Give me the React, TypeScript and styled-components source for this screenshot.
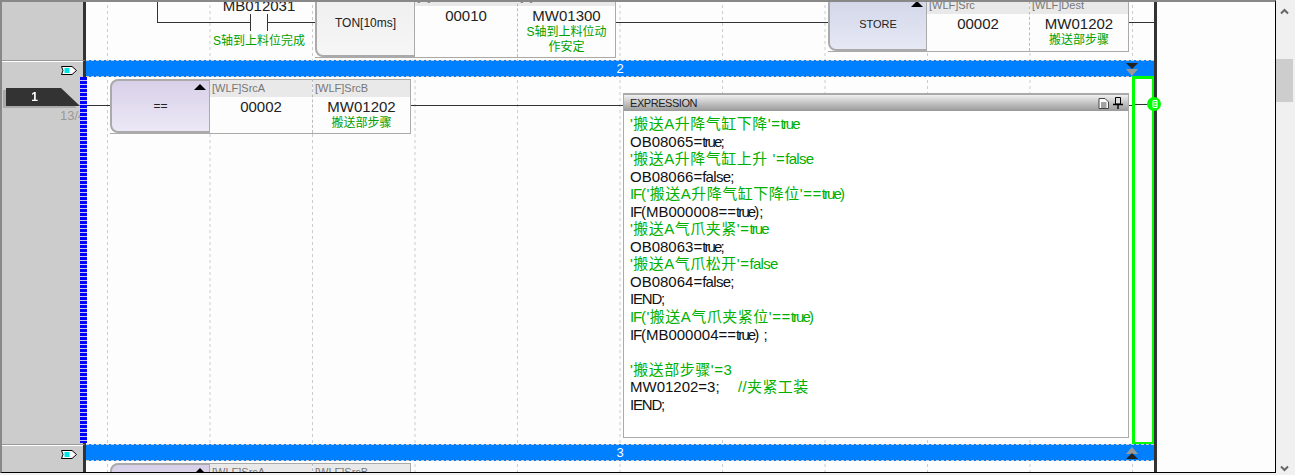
import React from 'react';
import styled, { createGlobalStyle } from 'styled-components';

const Global = createGlobalStyle`
  html, body { margin: 0; padding: 0; background: #f0f0f0; }
  body { font-family: "Liberation Sans", "Noto Sans CJK SC", sans-serif; }
  * { box-sizing: border-box; }
`;

const Window = styled.div`
  width: 1295px; height: 475px; display: flex; overflow: hidden; background: #f0f0f0;
`;
const Main = styled.div`
  width: 1276px; height: 473px; display: flex;
  border-top: 2px solid #888; border-left: 2px solid #888; border-bottom: 1px solid #000; border-right: 1px solid #000;
  background: #fdfdfd;
`;
const Ladder = styled.div`
  width: 1155px; display: flex; flex-direction: column;
`;
const Blank = styled.div`flex: 1; background: #fdfdfd;`;

const Scrollbar = styled.div`
  width: 17px; height: 473px; margin-top: 2px; background: #f0f0f0; display: flex; flex-direction: column;
  align-items: center; padding: 6px 0 3px;
`;
const Thumb = styled.div`
  width: 17px; height: 43px; background: #cdcdcd; margin-top: 44px;
`;
const ScrollSpace = styled.div`flex: 1;`;

const Row = styled.div<{ $h: number }>`
  display: flex; height: ${p => p.$h}px; flex: none;
`;
const Gutter = styled.div`
  width: 84px; flex: none; background: #ccc; border-right: 3px solid #333; display: flex; position: relative; z-index: 2;
`;
const BarGutter = styled(Gutter)`
  border-top: 1px solid #999; box-shadow: inset 0 1px 0 #fff; justify-content: flex-end; padding: 5px 6px 0 0;
  align-items: flex-start;
`;
const GutterStack = styled.div`
  flex: 1; display: flex; flex-direction: column; padding: 11px 0 0 4px; min-width: 0; overflow: hidden;
`;
const Ticks = styled.div`
  width: 7px; margin: 0 -4px 0 0; flex: none; height: 366px;
  background: repeating-linear-gradient(180deg, #0000ff 0 3px, #c8c8ec 3px 4px);
`;
const StepWrap = styled.div`
  width: 74px; filter: drop-shadow(-3px 2px 0 #aaa);
`;
const Step = styled.div`
  width: 74px; height: 18px; background: #333; color: #fff; font-size: 12px; font-weight: 700; line-height: 18px;
  text-align: center; padding-right: 17px;
  clip-path: polygon(0 0, 55px 0, 74px 18px, 0 18px);
`;
const StepCount = styled.div`
  margin: 3px 0 0 54px; font-size: 13px; line-height: 14px; color: #999; white-space: nowrap;
`;

const Canvas = styled.div<{ $clip?: boolean }>`
  width: 1068px; flex: none; position: relative; display: flex; align-items: flex-start;
  overflow: ${p => (p.$clip ? 'hidden' : 'visible')};
  background-color: #fdfdfd;
  background-image: linear-gradient(#fdfdfd 3px, transparent 3px), linear-gradient(90deg, #ccc 1px, transparent 1px);
  background-size: 100% 6px, 102.5px 100%;
  background-position: 0 0, 21px 0;
`;
const RightRail = styled.div`width: 3px; flex: none; background: #333;`;

const Bar = styled.div`
  width: 1068px; flex: none; position: relative; background: #0080ff; color: #fff; font-size: 13px;
  border-top: 1px dashed #ccc; border-bottom: 1px dashed #ccc;
  display: flex; align-items: center; justify-content: center;
`;
const BarMarks = styled.svg`
  position: absolute; right: 16px; top: 2px;
`;

const Wire = styled.div<{ $w?: number; $top: number }>`
  flex: ${p => (p.$w ? `0 0 ${p.$w}px` : '1')}; height: 1px; background: #333; margin-top: ${p => p.$top}px;
`;
const Gap = styled.div<{ $w: number }>`flex: 0 0 ${p => p.$w}px;`;
const Elbow = styled.div`
  flex: 0 0 93px; height: 21px; border-left: 1px solid #333; border-bottom: 1px solid #333;
`;
const Contact = styled.div`
  flex: 0 0 18px; min-width: 0; display: flex; flex-direction: column; align-items: center; margin-top: -5px;
`;
const ContactName = styled.div`
  font-size: 15px; line-height: 17px; color: #222; white-space: nowrap;
`;
const ContactBars = styled.div`
  width: 18px; height: 17px; flex: none; border-left: 1px solid #333; border-right: 1px solid #333;
`;
const ContactNote = styled.div`
  margin-top: 3px; font-size: 12px; line-height: 14px; color: #00a000; white-space: nowrap;
`;

const Block = styled.div<{ $top: number; $h: number; $head: number; $mid: number }>`
  flex: 0 0 301px; height: ${p => p.$h}px; margin-top: ${p => p.$top}px;
  display: grid; grid-template-columns: ${p => p.$head}px ${p => p.$mid}px 1fr;
  border-right: 1px solid #aaa; border-bottom: 1px solid #aaa; background: #fdfdfd; position: relative;
`;
const Head = styled.div<{ $from: string; $to: string; $size?: number }>`
  border: 2px solid #aaa; border-right: 1px solid #aaa; border-radius: 8px 0 0 8px;
  background: linear-gradient(180deg, ${p => p.$from}, ${p => p.$to});
  display: flex; align-items: center; justify-content: center; font-size: ${p => p.$size ?? 12}px; color: #222; position: relative;
`;
const HeadMark = styled.span`
  position: absolute; top: 3px; right: 3px; width: 0; height: 0;
  border-left: 6px solid transparent; border-right: 6px solid transparent; border-bottom: 6px solid #000;
`;
const Cell = styled.div<{ $dashed?: boolean }>`
  border-top: 1px solid #aaa; display: flex; flex-direction: column; align-items: center; min-width: 0;
  ${p => (p.$dashed ? 'border-left: 1px dashed #bbb;' : '')}
`;
const CellLabel = styled.div`
  align-self: stretch; height: 17px; flex: none; background: #e9e9e9; color: #777; font-size: 11px; line-height: 16px; padding-left: 2px;
`;
const CellValue = styled.div`
  margin-top: 1px; font-size: 15px; line-height: 18px; color: #222;
`;
const CellNote = styled.div`
  font-size: 12px; line-height: 15px; color: #00a000; text-align: center; width: 84px;
`;

const Expression = styled.div`
  flex: 0 0 506px; height: 345px; margin-top: 16px; border: 1px solid #aaa; border-top: 2px solid #aaa; background: #fff;
  display: flex; flex-direction: column;
`;
const ExprHead = styled.div`
  height: 16px; flex: none; background: linear-gradient(180deg, #f0f0f0 0%, #c8c8c8 45%, #999 100%);
  display: flex; align-items: center; justify-content: space-between; padding: 0 5px 0 6px;
  font-size: 11px; letter-spacing: -0.45px; color: #222;
`;
const ExprIcons = styled.div`display: flex; align-items: center; gap: 4px;`;
const ExprBody = styled.div`
  padding: 4px 0 0 6px; font-size: 15px; line-height: 17.55px; color: #111; white-space: pre;
`;
const ExprLine = styled.div<{ $note?: boolean }>`
  height: 17.55px; color: ${p => (p.$note ? '#00b000' : '#111')};
  letter-spacing: ${p => (p.$note ? '0.5px' : '0')};
`;
const Note = styled.span`color: #00b000; letter-spacing: 0.4px;`;
const Tight = styled.span<{ $s: number }>`letter-spacing: ${p => p.$s}px;`;

const Coil = styled.div`
  flex: 0 0 22px; height: 368px; margin-top: -1px; border: 3px solid #00ff00; border-right-width: 2px; border-bottom-width: 2px;
  position: relative; z-index: 1;
`;
const CoilWire = styled.div`height: 1px; background: #333; margin-top: 25px;`;
const CoilBadge = styled.svg`position: absolute; top: 18px; right: -9px;`;

const Plug = () => (
  <svg width="16" height="9" viewBox="0 0 16 9">
    <path d="M0.5 0.5H11L15.5 4.5L11 8.5H0.5L2 4.5Z" fill="#fff" stroke="#000" />
    <rect x="3.5" y="2" width="5" height="5" fill="#00e5e5" />
  </svg>
);
const Tri = ({ flip }: { flip?: boolean }) => (
  <BarMarks width="12" height="13" viewBox="0 0 12 13">
    {flip ? (
      <>
        <path d="M6 0L12 7H0Z" fill="#999" />
        <path d="M6 6L12 12H0Z" fill="#222" />
      </>
    ) : (
      <>
        <path d="M0 0H12L6 6Z" fill="#222" />
        <path d="M0 6H12L6 13Z" fill="#999" />
      </>
    )}
  </BarMarks>
);
const Chevron = ({ down }: { down?: boolean }) => (
  <svg width="9" height="7" viewBox="0 0 9 7">
    <path d={down ? 'M1 1.5L4.5 5L8 1.5' : 'M1 5.5L4.5 2L8 5.5'} fill="none" stroke="#666" strokeWidth="2" />
  </svg>
);

const lines: { t: string; note?: boolean }[] = [
  { t: "'搬送A升降气缸下降'=true", note: true },
  { t: 'OB08065=true;' },
  { t: "'搬送A升降气缸上升 '=false", note: true },
  { t: 'OB08066=false;' },
  { t: "IF('搬送A升降气缸下降位'==true)", note: true },
  { t: 'IF(MB000008==true);' },
  { t: "'搬送A气爪夹紧'=true", note: true },
  { t: 'OB08063=true;' },
  { t: "'搬送A气爪松开'=false", note: true },
  { t: 'OB08064=false;' },
  { t: 'IEND;' },
  { t: "IF('搬送A气爪夹紧位'==true)", note: true },
  { t: 'IF(MB000004==true) ;' },
  { t: ' ' },
  { t: "'搬送部步骤'=3", note: true },
  { t: 'MW01202=3;' },
  { t: 'IEND;' },
];

const squeeze = (t: string) =>
  t.split(/(true|false|IF|IEND)/).map((s, i) => {
    if (s === 'true') return <Tight key={i} $s={-1.9}>{s}</Tight>;
    if (s === 'false') return <Tight key={i} $s={-0.7}>{s}</Tight>;
    if (s === 'IF' || s === 'IEND') return <Tight key={i} $s={-1.2}>{s}</Tight>;
    return <span key={i}>{s}</span>;
  });

const EqBlock = () => (
  <Block $top={2} $h={55} $head={100} $mid={102}>
    <Head $from="#d8d0e8" $to="#ece8f6">==<HeadMark /></Head>
    <Cell>
      <CellLabel>[WLF]SrcA</CellLabel>
      <CellValue>00002</CellValue>
    </Cell>
    <Cell $dashed>
      <CellLabel>[WLF]SrcB</CellLabel>
      <CellValue>MW01202</CellValue>
      <CellNote>搬送部步骤</CellNote>
    </Cell>
  </Block>
);

export default function App() {
  return (
    <>
      <Global />
      <Window>
        <Main>
          <Ladder>
            <Row $h={58}>
              <Gutter />
              <Canvas $clip>
                <Gap $w={71} />
                <Elbow />
                <Contact>
                  <ContactName>MB012031</ContactName>
                  <ContactBars />
                  <ContactNote>S轴到上料位完成</ContactNote>
                </Contact>
                <Wire $w={47} $top={20} />
                <Block $top={-14} $h={70} $head={100} $mid={102}>
                  <Head $from="#eeeeee" $to="#f6f6f6">TON[10ms]</Head>
                  <Cell>
                    <CellLabel>[P]</CellLabel>
                    <CellValue>00010</CellValue>
                  </Cell>
                  <Cell $dashed>
                    <CellLabel>[T]</CellLabel>
                    <CellValue>MW01300</CellValue>
                    <CellNote>S轴到上料位动作安定</CellNote>
                  </Cell>
                </Block>
                <Wire $top={20} />
                <Block $top={-6} $h={56} $head={99} $mid={102}>
                  <Head $from="#d2d6e8" $to="#e6e8f5" $size={11}>STORE<HeadMark /></Head>
                  <Cell>
                    <CellLabel>[WLF]Src</CellLabel>
                    <CellValue>00002</CellValue>
                  </Cell>
                  <Cell $dashed>
                    <CellLabel>[WLF]Dest</CellLabel>
                    <CellValue>MW01202</CellValue>
                    <CellNote>搬送部步骤</CellNote>
                  </Cell>
                </Block>
                <Wire $w={25} $top={20} />
              </Canvas>
              <RightRail />
            </Row>

            <Row $h={17}>
              <BarGutter><Plug /></BarGutter>
              <Bar>2<Tri /></Bar>
              <RightRail />
            </Row>

            <Row $h={367}>
              <Gutter>
                <GutterStack>
                  <StepWrap><Step>1</Step></StepWrap>
                  <StepCount>13/4</StepCount>
                </GutterStack>
                <Ticks />
              </Gutter>
              <Canvas>
                <Wire $w={24} $top={28} />
                <EqBlock />
                <Wire $w={212} $top={28} />
                <Expression>
                  <ExprHead>
                    EXPRESSION
                    <ExprIcons>
                      <svg width="11" height="11" viewBox="0 0 11 11">
                        <path d="M1 0.5H7L10.5 4V10.5H1Z" fill="#fff" stroke="#444" />
                        <path d="M3 5H8.5M3 7H8.5M3 9H8.5" stroke="#444" />
                      </svg>
                      <svg width="10" height="12" viewBox="0 0 10 12">
                        <path d="M2.5 0.5H7.5V7H2.5Z" fill="#ddd" stroke="#000" />
                        <path d="M0 7.5H10M5 8V12" stroke="#000" strokeWidth="1.4" />
                      </svg>
                    </ExprIcons>
                  </ExprHead>
                  <ExprBody>
                    {lines.map((l, i) => (
                      <ExprLine key={i} $note={l.note}>
                        {squeeze(l.t)}
                        {l.t === 'MW01202=3;' && <Note>{'    //夹紧工装'}</Note>}
                      </ExprLine>
                    ))}
                  </ExprBody>
                </Expression>
                <Wire $w={3} $top={28} />
                <Coil>
                  <CoilWire />
                  <CoilBadge width="14" height="14" viewBox="0 0 14 14">
                    <circle cx="7" cy="7" r="7" fill="#00ff00" />
                    <path d="M6 3.5H10V10.5H6M6 3.5V10.5M7 5.8H10M7 8.2H10" fill="none" stroke="#fff" />
                  </CoilBadge>
                </Coil>
              </Canvas>
              <RightRail />
            </Row>

            <Row $h={17}>
              <BarGutter><Plug /></BarGutter>
              <Bar>3<Tri flip /></Bar>
              <RightRail />
            </Row>

            <Row $h={11}>
              <Gutter />
              <Canvas $clip>
                <Gap $w={24} />
                <EqBlock />
              </Canvas>
              <RightRail />
            </Row>
          </Ladder>
          <Blank />
        </Main>
        <Scrollbar>
          <Chevron />
          <Thumb />
          <ScrollSpace />
          <Chevron down />
        </Scrollbar>
      </Window>
    </>
  );
}
